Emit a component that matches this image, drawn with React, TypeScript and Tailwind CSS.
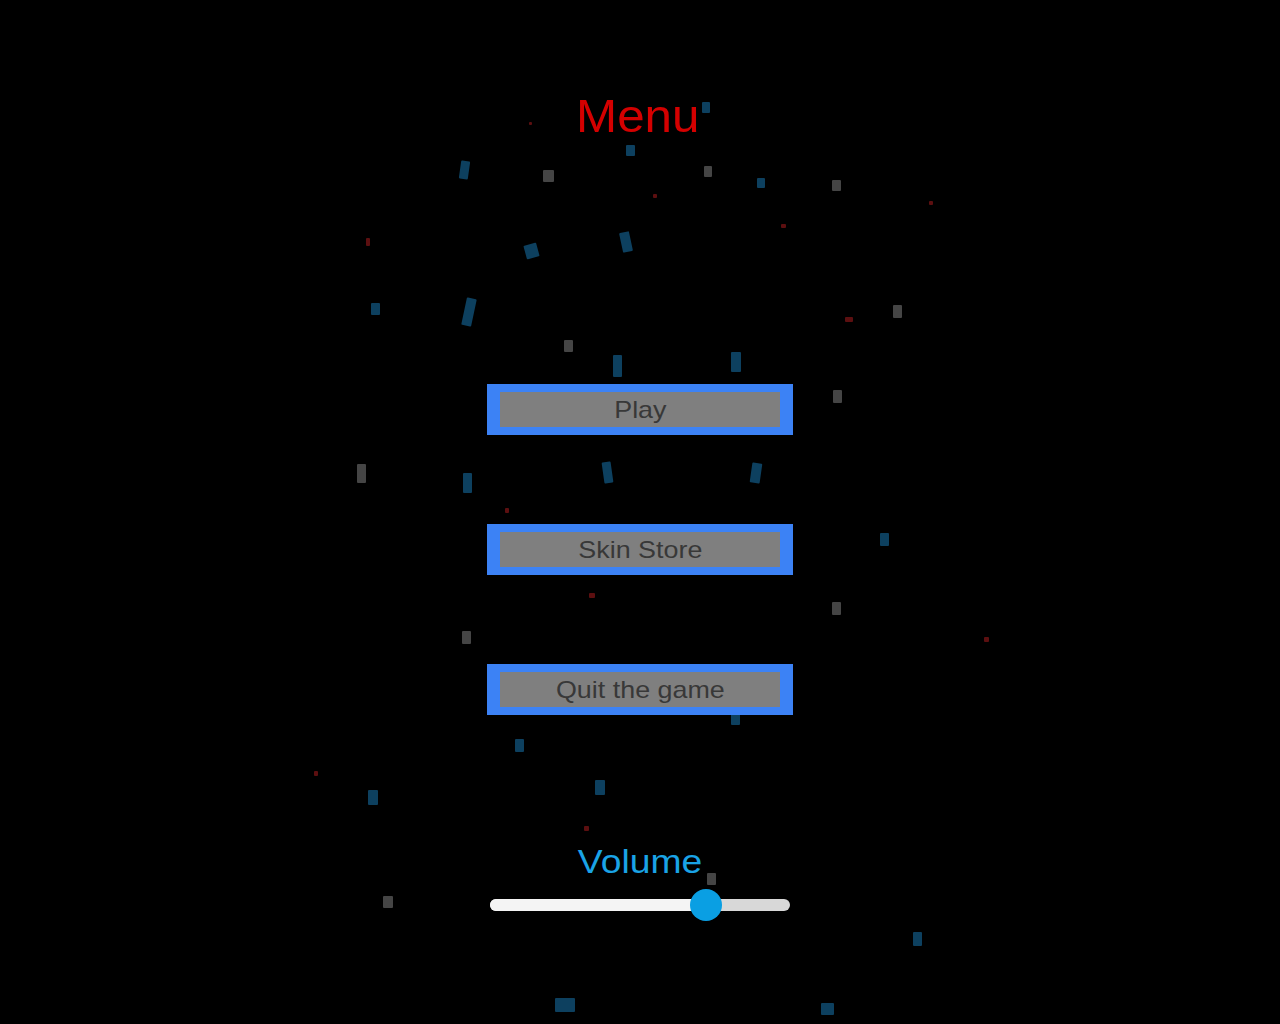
import React from 'react';

type Bit = { x: number; y: number; w: number; h: number; c: string; r?: number };

const BLUE = '#0d405f';
const GRAY = '#454545';
const RED = '#5c0f10';

// floating debris behind the menu
const debris: Bit[] = [
  { x: 529, y: 122, w: 3, h: 3, c: RED },
  { x: 702, y: 102, w: 8, h: 11, c: BLUE },
  { x: 626, y: 145, w: 9, h: 11, c: BLUE },
  { x: 460, y: 161, w: 9, h: 18, c: BLUE, r: 8 },
  { x: 543, y: 170, w: 11, h: 12, c: GRAY },
  { x: 704, y: 166, w: 8, h: 11, c: GRAY },
  { x: 757, y: 178, w: 8, h: 10, c: BLUE },
  { x: 832, y: 180, w: 9, h: 11, c: GRAY },
  { x: 653, y: 194, w: 4, h: 4, c: RED },
  { x: 929, y: 201, w: 4, h: 4, c: RED },
  { x: 781, y: 224, w: 5, h: 4, c: RED },
  { x: 366, y: 238, w: 4, h: 8, c: RED },
  { x: 525, y: 244, w: 13, h: 14, c: BLUE, r: -15 },
  { x: 621, y: 232, w: 10, h: 20, c: BLUE, r: -12 },
  { x: 464, y: 298, w: 10, h: 28, c: BLUE, r: 12 },
  { x: 371, y: 303, w: 9, h: 12, c: BLUE },
  { x: 845, y: 317, w: 8, h: 5, c: RED },
  { x: 893, y: 305, w: 9, h: 13, c: GRAY },
  { x: 564, y: 340, w: 9, h: 12, c: GRAY },
  { x: 613, y: 355, w: 9, h: 22, c: BLUE },
  { x: 731, y: 352, w: 10, h: 20, c: BLUE },
  { x: 833, y: 390, w: 9, h: 13, c: GRAY },
  { x: 357, y: 464, w: 9, h: 19, c: GRAY },
  { x: 463, y: 473, w: 9, h: 20, c: BLUE },
  { x: 603, y: 462, w: 9, h: 21, c: BLUE, r: -8 },
  { x: 751, y: 463, w: 10, h: 20, c: BLUE, r: 8 },
  { x: 505, y: 508, w: 4, h: 5, c: RED },
  { x: 880, y: 533, w: 9, h: 13, c: BLUE },
  { x: 589, y: 593, w: 6, h: 5, c: RED },
  { x: 832, y: 602, w: 9, h: 13, c: GRAY },
  { x: 462, y: 631, w: 9, h: 13, c: GRAY },
  { x: 984, y: 637, w: 5, h: 5, c: RED },
  { x: 731, y: 713, w: 9, h: 12, c: BLUE },
  { x: 515, y: 739, w: 9, h: 13, c: BLUE },
  { x: 314, y: 771, w: 4, h: 5, c: RED },
  { x: 368, y: 790, w: 10, h: 15, c: BLUE },
  { x: 595, y: 780, w: 10, h: 15, c: BLUE },
  { x: 584, y: 826, w: 5, h: 5, c: RED },
  { x: 707, y: 873, w: 9, h: 12, c: GRAY },
  { x: 383, y: 896, w: 10, h: 12, c: GRAY },
  { x: 913, y: 932, w: 9, h: 14, c: BLUE },
  { x: 555, y: 998, w: 20, h: 14, c: BLUE },
  { x: 821, y: 1003, w: 13, h: 12, c: BLUE },
];

function MenuButton({ label }: { label: string }) {
  return (
    <button className="w-[306px] h-[51px] bg-[#3c82f5] px-[13px] py-[8px] cursor-pointer">
      <div className="w-full h-full bg-[#7f7f7f] flex items-center justify-center">
        <span className="inline-block text-[24px] leading-none scale-x-[1.12] text-[#383838]">{label}</span>
      </div>
    </button>
  );
}

export default function App() {
  const volume = 72;

  return (
    <div
      className="relative w-[1280px] h-[1024px] bg-black overflow-hidden"
      style={{ fontFamily: '"Liberation Sans", Arial, sans-serif' }}
    >
      {debris.map((b, i) => (
        <div
          key={i}
          className="absolute rounded-[1px]"
          style={{
            left: b.x,
            top: b.y,
            width: b.w,
            height: b.h,
            background: b.c,
            transform: b.r ? `rotate(${b.r}deg)` : undefined,
          }}
        />
      ))}

      <div className="relative flex flex-col items-center pt-[92px]">
        <h1 className="-ml-[4px] text-[47px] leading-none scale-x-[1.05] text-[#d40000]">Menu</h1>

        <div className="mt-[245px] flex flex-col items-center gap-[89px]">
          <MenuButton label="Play" />
          <MenuButton label="Skin Store" />
          <MenuButton label="Quit the game" />
        </div>

        <div className="mt-[130px] text-[33px] leading-none scale-x-[1.13] text-[#1aa3e6]">Volume</div>

        <div className="mt-[11px] relative w-[300px] h-[32px] flex items-center">
          <div className="w-full h-[12px] rounded-full bg-[#d8d8d8] overflow-hidden">
            <div className="h-full bg-[#f4f4f4]" style={{ width: `${volume}%` }} />
          </div>
          <div
            className="absolute top-0 w-[32px] h-[32px] -ml-[16px] rounded-full bg-[#0a9fe3]"
            style={{ left: `${volume}%` }}
          />
        </div>
      </div>
    </div>
  );
}
